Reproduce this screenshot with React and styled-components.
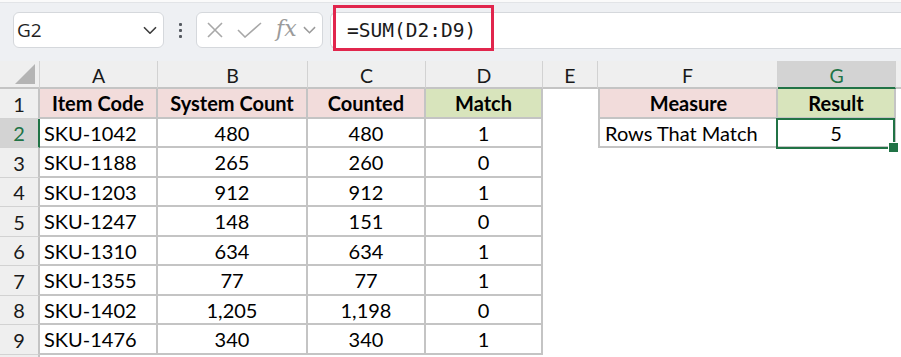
import React from "react";
import styled, { createGlobalStyle, css } from "styled-components";

const GlobalStyle = createGlobalStyle`
  html, body { margin: 0; padding: 0; background: #ffffff; }
  * { box-sizing: border-box; }
`;

const GREEN = "#217346";
const LINE = "#c4c4c4";

const Page = styled.div`
  width: 901px;
  height: 357px;
  overflow: hidden;
  background: #ffffff;
  font-family: Lato, "Noto Sans", sans-serif;
`;

const TopEdge = styled.div`
  height: 3px;
  background: #fafafa;
  border-bottom: 1px solid #e2e4e7;
`;

const FormulaArea = styled.div`
  height: 58px;
  background: #eef0f3;
  display: flex;
  align-items: flex-start;
  padding: 9px 0 0 13px;
`;

const Box = styled.div`
  height: 36px;
  background: #ffffff;
  border: 1px solid #d5d8dc;
  border-radius: 6px;
  display: flex;
  align-items: center;
`;

const NameBox = styled(Box)`
  width: 151px;
  justify-content: space-between;
  padding: 0 6px 0 3px;
  font-family: "Open Sans", "Noto Sans", sans-serif;
  font-size: 19px;
  color: #1f1f1f;
`;

const Dots = styled.div`
  width: 32px;
  height: 36px;
  display: flex;
  flex-direction: column;
  align-items: center;
  justify-content: center;
  gap: 3px;
  span {
    width: 3px;
    height: 3px;
    border-radius: 1px;
    background: #555a60;
  }
`;

const FxBox = styled(Box)`
  width: 127px;
  padding: 0 0 0 9px;
  gap: 0;
`;

const FxText = styled.span`
  font-family: "DejaVu Serif", "Liberation Serif", serif;
  font-style: italic;
  font-size: 22px;
  color: #9b9b9b;
  margin: 0 6px 0 14px;
  line-height: 1;
  padding-bottom: 3px;
`;

const FormulaInput = styled.div`
  position: relative;
  flex: 1;
  height: 37px;
  margin-left: 7px;
  background: #ffffff;
  border: 1px solid #d5d8dc;
  border-right: none;
  border-radius: 6px 0 0 6px;
  display: flex;
  align-items: center;
  padding-left: 16px;
  font-family: "DejaVu Sans Mono", "Liberation Mono", monospace;
  font-size: 19.5px;
  color: #1a1a1a;
`;

const Callout = styled.div`
  position: absolute;
  left: 2px;
  top: -8px;
  width: 161px;
  height: 46px;
  border: 3px solid #e1264d;
  pointer-events: none;
`;

const Sheet = styled.div`
  display: grid;
  grid-template-columns: 40px 118px 150px 118px 117px 55px 180px 118px 1fr;
  grid-template-rows: 28px repeat(10, 29.5px);
  font-size: 20px;
  color: #000000;
`;

const Corner = styled.div`
  background: #efefef;
  border-right: 1px solid #d2d2d2;
  border-bottom: 2px solid ${LINE};
  position: relative;
  &::after {
    content: "";
    position: absolute;
    right: 4px;
    bottom: 3px;
    width: 0;
    height: 0;
    border-left: 20px solid transparent;
    border-bottom: 20px solid #b4b4b4;
  }
`;

const ColHead = styled.div`
  background: ${(p) => (p.$active ? "#d3d3d3" : "#efefef")};
  color: ${(p) => (p.$active ? GREEN : "#1a1a1a")};
  border-right: 1px solid #d2d2d2;
  border-bottom: 2px solid ${(p) => (p.$active ? GREEN : LINE)};
  display: flex;
  align-items: center;
  justify-content: center;
  font-size: 19.5px;
  padding-top: 2px;
`;

const RowHead = styled.div`
  background: ${(p) => (p.$active ? "#d3d3d3" : "#efefef")};
  color: ${(p) => (p.$active ? GREEN : "#1a1a1a")};
  border-bottom: 1px solid #d2d2d2;
  border-right: 2px solid ${(p) => (p.$active ? GREEN : LINE)};
  display: flex;
  align-items: center;
  justify-content: center;
  padding-top: 1px;
`;

const Cell = styled.div`
  position: relative;
  display: flex;
  align-items: center;
  justify-content: ${(p) => (p.$center ? "center" : "flex-start")};
  padding: 1px 4px 0 ${(p) => (p.$left ? "5px" : "4px")};
  background: ${(p) => p.$bg || "#ffffff"};
  font-weight: ${(p) => (p.$bold ? 700 : 400)};
  white-space: nowrap;
  ${(p) =>
    p.$border &&
    css`
      border-right: 2px solid ${LINE};
      border-bottom: 2px solid ${LINE};
    `}
  ${(p) =>
    p.$left &&
    css`
      border-left: 2px solid ${LINE};
    `}
  ${(p) =>
    p.$selected &&
    css`
      &::before {
        content: "";
        position: absolute;
        top: -1px;
        left: -2px;
        right: -1px;
        bottom: -3px;
        border: 2px solid ${GREEN};
        z-index: 2;
      }
      &::after {
        content: "";
        position: absolute;
        right: -5px;
        bottom: -7px;
        width: 9px;
        height: 9px;
        background: ${GREEN};
        border: 1px solid #ffffff;
        z-index: 3;
      }
    `}
`;

const PINK = "#f2dcdb";
const LIME = "#d8e4bc";

const rows = [
  ["SKU-1042", "480", "480", "1"],
  ["SKU-1188", "265", "260", "0"],
  ["SKU-1203", "912", "912", "1"],
  ["SKU-1247", "148", "151", "0"],
  ["SKU-1310", "634", "634", "1"],
  ["SKU-1355", "77", "77", "1"],
  ["SKU-1402", "1,205", "1,198", "0"],
  ["SKU-1476", "340", "340", "1"],
];

const columns = ["A", "B", "C", "D", "E", "F", "G", ""];

const Chevron = ({ color, size = 14 }) => (
  <svg width={size} height={size * 0.6} viewBox="0 0 14 8" fill="none">
    <polyline points="1,1 7,7 13,1" stroke={color} strokeWidth="1.6" />
  </svg>
);

export default function App() {
  return (
    <Page>
      <GlobalStyle />
      <TopEdge />
      <FormulaArea>
        <NameBox>
          <span>G2</span>
          <Chevron color="#3c3c3c" />
        </NameBox>
        <Dots>
          <span />
          <span />
          <span />
        </Dots>
        <FxBox>
          <svg width="18" height="18" viewBox="0 0 18 18">
            <path d="M2 2 L16 16 M16 2 L2 16" stroke="#a8a8a8" strokeWidth="1.6" />
          </svg>
          <svg width="25" height="16" viewBox="0 0 25 16" style={{ marginLeft: 13 }}>
            <polyline points="1,8 8,15 24,1" fill="none" stroke="#a8a8a8" strokeWidth="1.6" />
          </svg>
          <FxText>fx</FxText>
          <Chevron color="#9b9b9b" size={13} />
        </FxBox>
        <FormulaInput>
          =SUM(D2:D9)
          <Callout />
        </FormulaInput>
      </FormulaArea>

      <Sheet>
        <Corner />
        {columns.map((c) => (
          <ColHead key={c || "H"} $active={c === "G"}>
            {c}
          </ColHead>
        ))}

        <RowHead>1</RowHead>
        <Cell $bg={PINK} $bold $center $border>Item Code</Cell>
        <Cell $bg={PINK} $bold $center $border>System Count</Cell>
        <Cell $bg={PINK} $bold $center $border>Counted</Cell>
        <Cell $bg={LIME} $bold $center $border>Match</Cell>
        <Cell />
        <Cell $bg={PINK} $bold $center $border $left>Measure</Cell>
        <Cell $bg={LIME} $bold $center $border>Result</Cell>
        <Cell />

        {rows.map((r, i) => (
          <React.Fragment key={r[0]}>
            <RowHead $active={i === 0}>{i + 2}</RowHead>
            <Cell $border>{r[0]}</Cell>
            <Cell $border $center>{r[1]}</Cell>
            <Cell $border $center>{r[2]}</Cell>
            <Cell $border $center>{r[3]}</Cell>
            <Cell />
            {i === 0 ? (
              <>
                <Cell $border $left>Rows That Match</Cell>
                <Cell $border $center $selected>5</Cell>
              </>
            ) : (
              <>
                <Cell />
                <Cell />
              </>
            )}
            <Cell />
          </React.Fragment>
        ))}

        <RowHead />
        {columns.map((c) => (
          <Cell key={"r10" + c} />
        ))}
      </Sheet>
    </Page>
  );
}
